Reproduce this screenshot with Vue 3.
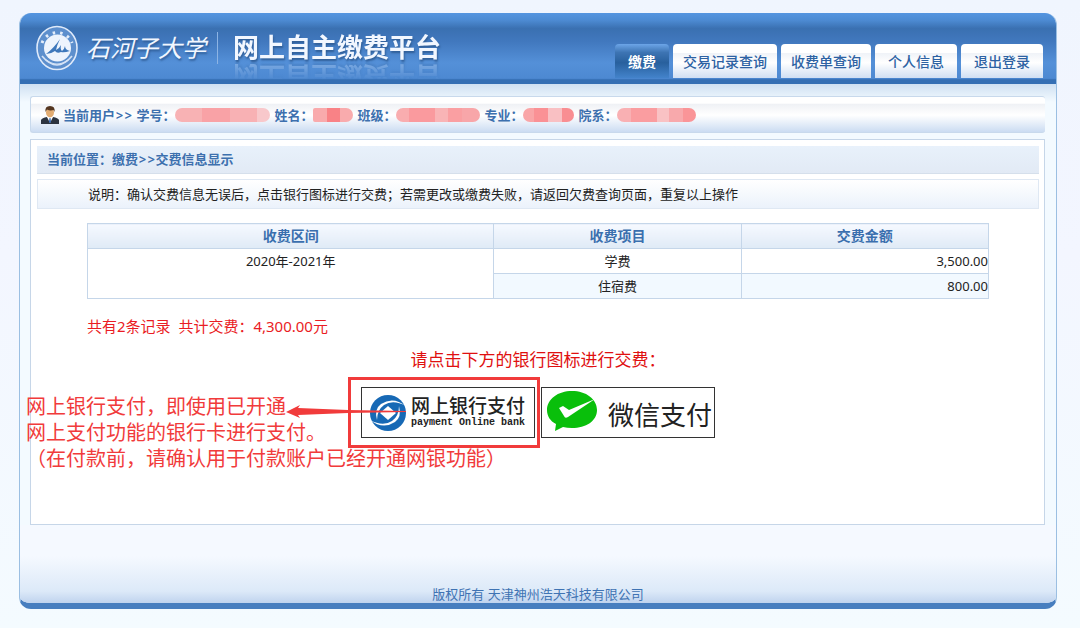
<!--
  缴费平台 - 交费信息显示页
  职责：展示当前用户、待缴费用明细以及银行支付入口。
  说明：图标全部为内联 SVG。
-->
<script setup>
import { computed, ref } from 'vue'

// 顶部导航
const tabs = [
  { key: 'pay', label: '缴费' },
  { key: 'trade', label: '交易记录查询' },
  { key: 'bill', label: '收费单查询' },
  { key: 'profile', label: '个人信息' },
  { key: 'logout', label: '退出登录' },
]
const activeTab = ref('pay')

// 当前用户信息（值已打码）
const userFields = [
  { key: 'no', label: '学号：' },
  { key: 'name', label: '姓名：' },
  { key: 'class', label: '班级：' },
  { key: 'major', label: '专业：' },
  { key: 'dept', label: '院系：' },
]

// 费用明细
const period = '2020年-2021年'
const fees = [
  { item: '学费', amount: 3500 },
  { item: '住宿费', amount: 800 },
]

const total = computed(() => fees.reduce((sum, fee) => sum + fee.amount, 0))

// 金额格式化：千分位 + 两位小数
function formatMoney(value) {
  return value.toLocaleString('en-US', { minimumFractionDigits: 2 })
}
</script>

<template>
  <div class="page">
    <div class="shell">
      <header class="header">
        <div class="brand">
          <svg class="brand-logo" viewBox="0 0 44 46" width="44" height="46" aria-hidden="true">
            <ellipse cx="22" cy="23" rx="20" ry="21.5" fill="#5d8fcd" stroke="#dfeafa" stroke-width="1.6" />
            <path d="M7 18A16 16 0 0 1 37 18" fill="none" stroke="#e4edfa" stroke-width="3" stroke-dasharray="2.5 5" />
            <path d="M7 31Q22 49 37 31" fill="none" stroke="#d5e3f6" stroke-width="1.6" />
            <path d="M11 35Q22 43 33 35" fill="none" stroke="#d5e3f6" stroke-width="1.2" />
            <circle cx="22.5" cy="23" r="13.5" fill="#eef4fd" />
            <path
              d="M11 29Q19 23 25 14Q22 20 21 25Q24 24 26 20Q25 24 27 26Q29 25 30 21Q30 25 35 26Q29 28 26 27Q22 29 20 26Q16 29 11 29Z"
              fill="#3f78bb"
            />
          </svg>
          <span class="brand-school">石河子大学</span>
          <span class="brand-line"></span>
          <h1 class="brand-title">网上自主缴费平台</h1>
        </div>
        <nav class="tabs">
          <button
            v-for="tab in tabs"
            :key="tab.key"
            class="tab"
            :class="{ 'tab--active': tab.key === activeTab, 'tab--long': tab.label.length > 4 }"
            type="button"
            @click="activeTab = tab.key"
          >
            {{ tab.label }}
          </button>
        </nav>
      </header>

      <main class="main">
        <div class="user-bar">
          <svg class="user-icon" viewBox="0 0 18 18" width="18" height="18" aria-hidden="true">
            <path d="M0 18V14Q1 12 6 11L9 13L12 11Q17 12 18 14V18Z" fill="#2d3440" />
            <path d="M6 11L9 17L12 11L9 10Z" fill="#fff" />
            <path d="M8.5 12H9.5L10 16L9 17L8 16Z" fill="#3569b5" />
            <ellipse cx="9" cy="6.5" rx="4" ry="5" fill="#e2ac72" />
            <path d="M4.5 6Q3.5 0 9 0T13.5 6L12.5 4Q9 5 6 3.5Z" fill="#54351f" />
          </svg>
          <span class="user-label">当前用户<span class="arrows">&gt;&gt;</span></span>
          <span v-for="field in userFields" :key="field.key" class="user-field">
            {{ field.label }}<span class="mask" :class="`mask--${field.key}`"></span>
          </span>
        </div>

        <section class="panel">
          <div class="crumb">当前位置：缴费<span class="arrows">&gt;&gt;</span>交费信息显示</div>
          <p class="notice">说明：确认交费信息无误后，点击银行图标进行交费；若需更改或缴费失败，请返回欠费查询页面，重复以上操作</p>

          <div class="bill">
            <table class="bill-table">
              <thead>
                <tr>
                  <th class="col-period" scope="col">收费区间</th>
                  <th scope="col">收费项目</th>
                  <th scope="col">交费金额</th>
                </tr>
              </thead>
              <tbody>
                <tr v-for="(fee, index) in fees" :key="fee.item">
                  <td v-if="index === 0" class="cell-period" :rowspan="fees.length">{{ period }}</td>
                  <td>{{ fee.item }}</td>
                  <td class="cell-amount">{{ formatMoney(fee.amount) }}</td>
                </tr>
              </tbody>
            </table>
            <p class="summary">共有{{ fees.length }}条记录&nbsp; 共计交费：{{ formatMoney(total) }}元</p>
          </div>

          <p class="prompt">请点击下方的银行图标进行交费：</p>

          <div class="pay-list">
            <div class="pay-item">
              <button class="pay-btn pay-btn--bank" type="button">
                <svg viewBox="0 0 38 38" width="38" height="38" aria-hidden="true">
                  <circle cx="19" cy="19" r="18" fill="#1769b5" />
                  <path d="M37 12Q24 2 12 10Q5 15 8 26Q8 16 15 11Q24 5 37 12Z" fill="#fff" />
                  <path d="M1 26Q14 36 26 28Q33 23 30 12Q30 22 23 27Q14 33 1 26Z" fill="#fff" />
                  <path d="M19 12L27 19L19 26L11 19Z" fill="#fff" />
                </svg>
                <span class="bank-text">
                  <span class="bank-name">网上银行支付</span>
                  <span class="bank-sub">payment Online bank</span>
                </span>
              </button>
              <!-- 操作提示：红框、箭头与说明文字浮在按钮周围 -->
              <span class="hint-frame"></span>
              <svg class="hint-arrow" viewBox="0 0 130 16" width="130" height="16" aria-hidden="true">
                <path d="M0 9L14 2L12 5L62 7L120 8V9L62 10L12 12L14 15Z" fill="#f13b3b" />
              </svg>
              <div class="hint-text">
                <p>网上银行支付，即使用已开通</p>
                <p>网上支付功能的银行卡进行支付。</p>
                <p>（在付款前，请确认用于付款账户已经开通网银功能）</p>
              </div>
            </div>

            <button class="pay-btn pay-btn--wechat" type="button">
              <svg viewBox="0 0 52 42" width="52" height="42" aria-hidden="true">
                <path
                  d="M26 1C40 1 51 9 51 20S40 38 26 38Q21 38 17 37L9 41L10 34C4 31 1 26 1 20C1 9 12 1 26 1Z"
                  fill="#09bf0b"
                />
                <path d="M13 18L17 16L23 20L49 9L22 27Q19 29 18 26Z" fill="#fff" />
              </svg>
              <span class="wechat-name">微信支付</span>
            </button>
          </div>
        </section>
      </main>

      <footer class="footer">版权所有 天津神州浩天科技有限公司</footer>
    </div>
  </div>
</template>

<style>
body {
  margin: 0;
}
</style>

<style scoped>
.page {
  box-sizing: border-box;
  display: flex;
  min-height: 100vh;
  padding: 13px 23px 19px 19px;
  background: linear-gradient(#f0f5fe, #f3f6ff 40%, #f4fbff);
  color: #222222;
  font-family: 'Noto Sans', 'Noto Sans CJK SC', sans-serif;
  font-size: 13px;
  line-height: 20px;
}

.page p,
.page h1 {
  margin: 0;
}

.shell {
  box-sizing: border-box;
  flex: 1;
  display: flex;
  flex-direction: column;
  min-width: 0;
  overflow: hidden;
  background: #f3f9ff;
  border: 1px solid #9bbfe2;
  border-top: none;
  border-bottom: 6px solid #477ebf;
  border-radius: 12px;
}

/* 顶部 */
.header {
  box-sizing: border-box;
  display: flex;
  justify-content: space-between;
  height: 71px;
  padding: 0 13px 0 15px;
  background: linear-gradient(#5595e0, #4d8bd3 10%, #3a70b1 22%, #4178be 40%, #5490d8 70%, #4d89d2 92%, #356fb4 94%);
}

.brand {
  display: flex;
  align-items: center;
  padding-bottom: 2px;
  color: #f2f7ff;
  text-shadow: 1px 2px 2px #315f98;
}

.brand-school {
  margin-left: 7px;
  font-size: 24px;
  font-style: italic;
  line-height: 32px;
}

.brand-line {
  width: 1px;
  height: 32px;
  margin: 0 15px 0 11px;
  background: #8db4e4;
}

.brand-title {
  padding-bottom: 2px;
  font-size: 26px;
  font-weight: 700;
  line-height: 36px;
  -webkit-box-reflect: below -10px linear-gradient(transparent 40%, rgba(255, 255, 255, 0.35));
}

.tabs {
  display: flex;
  align-items: flex-end;
  gap: 4px;
  padding-bottom: 6px;
}

.tab {
  height: 34px;
  padding: 0 13px;
  border: none;
  border-radius: 4px 4px 0 0;
  background: linear-gradient(#ffffff, #ffffff 25%, #f0f3f8 28%, #ffffff 55%, #d0dff3);
  color: #2d62a3;
  font-family: inherit;
  font-size: 14px;
  font-weight: 500;
  white-space: nowrap;
  cursor: pointer;
}

.tab--long {
  padding: 0 10px;
}

.tab--active {
  background: linear-gradient(#6ca5e8, #3d74b3 25%, #28609d 55%, #4383cb);
  color: #ffffff;
  font-weight: 700;
}

/* 主体 */
.main {
  flex: 1;
  display: flex;
  flex-direction: column;
  gap: 6px;
  padding: 12px 11px 0 10px;
  background: linear-gradient(#cfe0f2, #f3faff 18px);
}

.user-bar {
  box-sizing: border-box;
  display: flex;
  align-items: center;
  gap: 4px;
  height: 37px;
  padding-left: 10px;
  border: 1px solid #c8d9ec;
  border-right: none;
  border-radius: 3px;
  background: linear-gradient(#ffffff 18%, #eff1f5 20%, #ffffff 52%, #cbdcf2);
  color: #3d70ae;
  font-weight: 700;
  white-space: nowrap;
}

.arrows {
  font-family: Inter, sans-serif;
  font-weight: 500;
}

.user-field {
  display: flex;
  align-items: center;
}

/* 打码色块 */
.mask {
  width: 84px;
  height: 14px;
  border-radius: 7px;
  background: linear-gradient(90deg, #f9adaf 16%, #fa9a9e 16% 46%, #f9b4b6 46% 62%, #fa9fa2 62% 78%, #f8a6a9 78%);
}

.mask--no {
  width: 95px;
  background: linear-gradient(90deg, #f8b2b4 28%, #f9a2a6 28% 58%, #f8b1b4 58% 86%, #f8c8cb 86%);
}

.mask--name {
  width: 40px;
  border-radius: 2px 7px 7px 2px;
  background: linear-gradient(90deg, #f9aaac 34%, #f98286 34% 68%, #f9abad 68%);
}

.mask--major {
  width: 51px;
  background: linear-gradient(90deg, #f9a5a7 22%, #fa9195 22% 50%, #f9c0c3 50% 76%, #f98e92 76%);
}

.mask--dept {
  width: 79px;
  background: linear-gradient(90deg, #f9b0b3 18%, #fa9da0 18% 50%, #f9c2c4 50% 66%, #f8a9ac 66% 84%, #fa9598 84%);
}

.panel {
  flex: 1;
  padding: 6px 5px 20px 6px;
  border: 1px solid #c6d6e8;
  background: #ffffff;
}

.crumb {
  padding: 3px 10px 4px;
  border-bottom: 1px solid #d5dfeb;
  background: linear-gradient(#e8f1fb, #e2eaf5);
  color: #3d70ae;
  font-weight: 700;
}

.page .notice {
  margin-top: 5px;
  padding: 4px 50px;
  border: 1px solid #dfe8f3;
  background: linear-gradient(#ffffff, #ebf2fb);
}

.bill {
  padding: 14px 50px 0;
}

.bill-table {
  width: 100%;
  border-collapse: collapse;
  table-layout: fixed;
}

.bill-table th,
.bill-table td {
  height: 24px;
  padding: 0;
  border: 1px solid #c5d6e9;
  text-align: center;
}

.bill-table th {
  background: linear-gradient(#f6f9ff, #dfeaf6);
  color: #3a6fae;
  font-size: 14px;
  font-weight: 700;
}

.col-period {
  width: 45%;
}

.bill-table .cell-period {
  padding-top: 2px;
  background: #ffffff;
  vertical-align: top;
}

.bill-table .cell-amount {
  text-align: right;
}

.bill-table tbody tr:nth-child(even) {
  background: #f2f9ff;
}

.page .summary {
  margin-top: 17px;
  color: #ea1c24;
  font-size: 15px;
}

.page .prompt {
  margin-top: 14px;
  color: #e01010;
  font-size: 17px;
  text-align: center;
}

/* 支付方式 */
.pay-list {
  display: flex;
  justify-content: center;
  gap: 6px;
  margin-top: 17px;
}

.pay-item {
  position: relative;
}

.pay-btn {
  box-sizing: border-box;
  display: flex;
  align-items: center;
  width: 174px;
  height: 51px;
  padding: 0 4px;
  border: 1px solid #333333;
  background: #ffffff;
  color: #222222;
  font-family: inherit;
  white-space: nowrap;
  cursor: pointer;
}

.pay-btn--bank {
  gap: 4px;
  padding-left: 7px;
}

.pay-btn--wechat {
  align-items: flex-start;
  justify-content: space-between;
  padding: 2px 2px 0 4px;
}

.bank-text {
  display: flex;
  flex-direction: column;
  align-items: center;
  padding-bottom: 4px;
}

.bank-name {
  font-size: 19px;
  font-weight: 500;
  line-height: 24px;
}

.bank-sub {
  font-family: 'Liberation Mono', monospace;
  font-size: 10px;
  font-weight: 700;
  line-height: 10px;
}

.wechat-name {
  padding-top: 9px;
  font-size: 26px;
  line-height: 32px;
}

.hint-frame {
  position: absolute;
  inset: -10px -5px -10px -13px;
  border: 3px solid #f13b3b;
  pointer-events: none;
}

.hint-arrow {
  position: absolute;
  top: 16px;
  left: -75px;
  pointer-events: none;
}

.hint-text {
  position: absolute;
  top: 7px;
  left: -335px;
  color: #f13b3b;
  font-size: 20px;
  line-height: 26px;
  white-space: nowrap;
  pointer-events: none;
}

.footer {
  box-sizing: border-box;
  height: 78px;
  padding-top: 60px;
  background: linear-gradient(#f5f9ff 40%, #dce9f8 85%, #bfd3ee);
  color: #3f73b3;
  line-height: 18px;
  text-align: center;
}
</style>
